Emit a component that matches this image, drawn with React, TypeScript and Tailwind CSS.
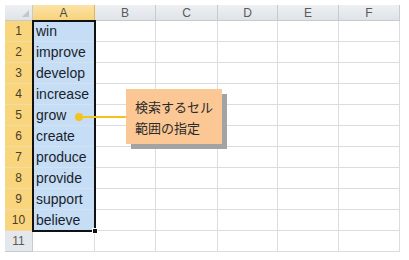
import React from 'react';

const cols = ['A', 'B', 'C', 'D', 'E', 'F'];
const widths = ['w-[62px]', 'w-[61px]', 'w-[62px]', 'w-[60px]', 'w-[61px]', 'w-[61px]'];
const words = ['win', 'improve', 'develop', 'increase', 'grow', 'create', 'produce', 'provide', 'support', 'believe', ''];

export default function App() {
  return (
    <div className="w-[409px] h-[260px] bg-white overflow-hidden pt-[5px] pl-[5px] font-['Liberation_Sans','Noto_Sans_CJK_JP',sans-serif]">
      <div className="relative w-fit">
        {/* Column headers */}
        <div className="flex h-[16px]">
          <div className="relative w-[28px] bg-gradient-to-b from-[#eef0f3] to-[#dfe3e8] border-r border-b border-[#c6cbd2]">
            <div className="absolute right-[3px] bottom-[3px] w-0 h-0 border-l-[7px] border-l-transparent border-b-[7px] border-b-[#c3c7cc]" />
          </div>
          {cols.map((c, i) => (
            <div
              key={c}
              className={`${widths[i]} flex items-center justify-center text-[12px] border-r border-b ${
                i === 0
                  ? 'bg-gradient-to-b from-[#fbe3a6] to-[#f8d37c] border-r-[#e0b560] border-b-[#f1b13e] text-[#4a4a4a]'
                  : 'bg-gradient-to-b from-[#eef0f3] to-[#dfe3e8] border-[#c6cbd2] text-[#5a5a5a]'
              }`}
            >
              {c}
            </div>
          ))}
        </div>

        {/* Rows */}
        {words.map((w, r) => (
          <div key={r} className="flex h-[21px]">
            <div
              className={`w-[28px] flex items-center justify-center text-[12px] border-r border-b ${
                r < 10
                  ? 'bg-[#f9d57e] border-r-[#e5b04a] border-b-[#f2dca6] text-[#4a3f2a]'
                  : 'bg-[#e4e7eb] border-[#c6cbd2] text-[#5a5a5a]'
              }`}
            >
              {r + 1}
            </div>
            {cols.map((c, i) => (
              <div
                key={c}
                className={`${widths[i]} flex items-center border-r border-b border-[#dadcdf] ${
                  i === 0 && r < 10 ? 'bg-[#c6ddf6] border-b-[#d3e2f3] border-r-[#c6ddf6]' : 'bg-white'
                }`}
              >
                {i === 0 && <span className="pl-[3px] text-[14px] text-[#1a1f2c] leading-none">{w}</span>}
              </div>
            ))}
          </div>
        ))}

        {/* Selection border A1:A10 with fill handle */}
        <div className="absolute left-[27px] top-[15px] w-[64px] h-[212px] border-2 border-[#111] pointer-events-none">
          <div className="absolute -right-[4px] -bottom-[4px] w-[6px] h-[6px] bg-[#111] border border-white" />
        </div>

        {/* Callout */}
        <div className="absolute left-[70px] top-[84px] flex items-center">
          <div className="w-[8px] h-[8px] rounded-full bg-[#f5c41c]" />
          <div className="w-[43px] h-[2px] bg-[#f5c41c]" />
          <div className="w-[96px] h-[55px] bg-[#fbc795] shadow-[5px_5px_0_#a3a3a3] pl-[9px] pt-[7px] text-[13px] leading-[21px] text-[#2a2a2a] font-['Noto_Sans_CJK_JP',sans-serif]">
            <div>検索するセル</div>
            <div>範囲の指定</div>
          </div>
        </div>
      </div>
    </div>
  );
}
